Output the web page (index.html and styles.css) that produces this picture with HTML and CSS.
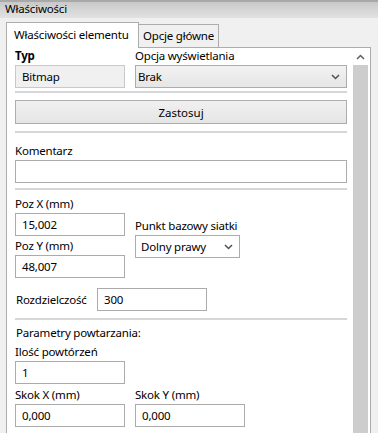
FILE: index.html
```html
<!DOCTYPE html>
<html lang="pl">
<head>
    <meta charset="UTF-8">
    <title>Właściwości</title>
    <link rel="stylesheet" href="styles.css">
</head>
<body>
    <div class="titlebar">Właściwości</div>

    <div class="tabs">
        <div class="tab active">Właściwości elementu</div>
        <div class="tab">Opcje główne</div>
    </div>

    <div class="panel">
        <div class="content">
            <div class="two-col top">
                <div class="field">
                    <div class="label bold">Typ</div>
                    <div class="box readonly">Bitmap</div>
                </div>
                <div class="field">
                    <div class="label">Opcja wyświetlania</div>
                    <div class="select grad">
                        <span>Brak</span>
                        <svg class="chev" width="9" height="6" viewBox="0 0 9 6"><polyline points="1,1 4.5,4.5 8,1" fill="none" stroke="#505050" stroke-width="1.5"/></svg>
                    </div>
                </div>
            </div>

            <div class="sep"></div>

            <button class="btn">Zastosuj</button>

            <div class="sep"></div>

            <div class="field comment">
                <div class="label">Komentarz</div>
                <div class="box"></div>
            </div>

            <div class="sep"></div>

            <div class="two-col position">
                <div class="stack">
                    <div class="field">
                        <div class="label">Poz X (mm)</div>
                        <div class="box">15,002</div>
                    </div>
                    <div class="field">
                        <div class="label">Poz Y (mm)</div>
                        <div class="box">48,007</div>
                    </div>
                </div>
                <div class="field grid-point">
                    <div class="label">Punkt bazowy siatki</div>
                    <div class="select small">
                        <span>Dolny prawy</span>
                        <svg class="chev" width="9" height="6" viewBox="0 0 9 6"><polyline points="1,1 4.5,4.5 8,1" fill="none" stroke="#505050" stroke-width="1.5"/></svg>
                    </div>
                </div>
            </div>

            <div class="inline-field">
                <div class="label">Rozdzielczość</div>
                <div class="box res">300</div>
            </div>

            <div class="sep"></div>

            <div class="label section">Parametry powtarzania:</div>
            <div class="field repeat">
                <div class="label">Ilość powtórzeń</div>
                <div class="box">1</div>
            </div>

            <div class="two-col steps">
                <div class="field">
                    <div class="label">Skok X (mm)</div>
                    <div class="box">0,000</div>
                </div>
                <div class="field">
                    <div class="label">Skok Y (mm)</div>
                    <div class="box">0,000</div>
                </div>
            </div>
        </div>

        <div class="scrollbar">
            <div class="sb-arrow">
                <svg width="9" height="6" viewBox="0 0 9 6"><polyline points="1,5 4.5,1.5 8,5" fill="none" stroke="#606060" stroke-width="1.5"/></svg>
            </div>
            <div class="sb-thumb"></div>
        </div>
    </div>
</body>
</html>
```

FILE: styles.css
```css
* {
    box-sizing: border-box;
}

body {
    margin: 0;
    background: #f0f0f0;
    font-family: "Noto Sans", "Open Sans", sans-serif;
    font-size: 11.5px;
    letter-spacing: -0.2px;
    color: #000;
    overflow: hidden;
    height: 433px;
}

.titlebar {
    height: 18px;
    line-height: 18px;
    padding-left: 5px;
    background: linear-gradient(#a9a9a9 0, #a9a9a9 2px, #c9c9c9 2px, #e2e2e2 100%);
}

/* Tabs */
.tabs {
    display: flex;
    align-items: flex-end;
    height: 29px;
    padding-left: 6px;
    position: relative;
    z-index: 1;
}

.tab {
    height: 23px;
    line-height: 21px;
    padding-left: 4px;
    width: 80px;
    white-space: nowrap;
    border: 1px solid #adadad;
    border-left: none;
    border-bottom: none;
    background: #f0f0f0;
}

.tab.active {
    width: 133px;
    height: 26px;
    line-height: 24px;
    padding-left: 7px;
    margin-bottom: -1px;
    border-left: 1px solid #adadad;
    background: #fff;
}

/* Panel */
.panel {
    display: flex;
    width: 365px;
    height: 400px;
    margin-left: 6px;
    border: 1px solid #adadad;
    border-bottom: none;
    background: #fff;
    overflow: hidden;
}

.content {
    width: 332px;
    margin-left: 8px;
    margin-right: 6px;
}

.scrollbar {
    width: 15px;
    margin-right: 2px;
    display: flex;
    flex-direction: column;
}

.sb-arrow {
    height: 17px;
    display: flex;
    align-items: center;
    justify-content: center;
}

.sb-thumb {
    flex: 1;
    background: #cdcdcd;
}

/* Form parts */
.label {
    line-height: 16px;
    white-space: nowrap;
}

.bold {
    font-weight: bold;
}

.field .label {
    margin-bottom: 1px;
}

.box {
    height: 23px;
    line-height: 21px;
    padding-left: 6px;
    border: 1px solid #ababab;
    background: #fff;
}

.box.readonly {
    background: #f0f0f0;
    border-color: #c9c9c9;
}

.select {
    display: flex;
    align-items: center;
    justify-content: space-between;
    height: 23px;
    padding: 0 6px 0 2px;
    border: 1px solid #acacac;
    background: #fff;
}

.select.grad {
    background: linear-gradient(#f2f2f2, #e6e6e6);
}

.select.small {
    width: 105px;
    padding-left: 5px;
}

.two-col {
    display: grid;
    grid-template-columns: 110px 1fr;
    column-gap: 10px;
}

.sep {
    height: 2px;
    background: #d6d6d6;
    margin-top: 3px;
}

.btn {
    display: block;
    width: 100%;
    height: 24px;
    margin-top: 7px;
    margin-bottom: 7px;
    padding: 0;
    font: inherit;
    color: #000;
    border: 1px solid #adadad;
    background: linear-gradient(#f0f0f0, #e5e5e5);
}

.btn + .sep {
    margin-top: 0;
}

.comment {
    margin-top: 10px;
}

.comment + .sep {
    margin-top: 5px;
}

.position {
    margin-top: 6px;
    align-items: center;
}

.stack {
    display: flex;
    flex-direction: column;
    gap: 2px;
}

.grid-point {
    padding-top: 2px;
}

.inline-field {
    display: flex;
    align-items: center;
    margin-top: 10px;
}

.inline-field .label {
    width: 82px;
    padding-left: 1px;
}

.box.res {
    width: 110px;
}

.inline-field + .sep {
    margin-top: 7px;
}

.section {
    margin-top: 5px;
    padding-left: 1px;
}

.repeat {
    width: 110px;
    margin-top: 3px;
}

.steps {
    grid-template-columns: 110px 110px;
    margin-top: 3px;
}
```
